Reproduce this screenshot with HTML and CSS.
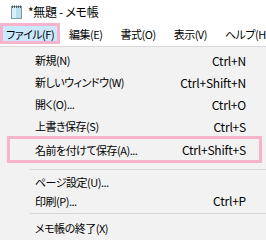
FILE: index.html
```html
<!DOCTYPE html>
<html lang="ja">
<head>
  <meta charset="UTF-8" />
  <title>*無題 - メモ帳</title>
  <link rel="stylesheet" href="styles.css">
</head>
<body>
  <div class="window">
    <div class="titlebar">
      <svg class="app-icon" width="11" height="14" viewBox="0 0 11 14">
        <rect x="0.5" y="1.5" width="10" height="12" fill="#cfeaf4" stroke="#7d97a3" />
        <rect x="1" y="2" width="9" height="11" fill="#b9dfee" />
        <rect x="1" y="2" width="4" height="11" fill="#d9f0f8" />
        <path d="M1.5 0.5v2.5M3.5 0.5v2.5M5.5 0.5v2.5M7.5 0.5v2.5M9.5 0.5v2.5" stroke="#555" stroke-width="1" />
      </svg>
      <span class="title">*無題 - メモ帳</span>
    </div>

    <div class="menubar">
      <span class="menu-item active">ファイル(F)</span>
      <span class="menu-item">編集(E)</span>
      <span class="menu-item">書式(O)</span>
      <span class="menu-item">表示(V)</span>
      <span class="menu-item">ヘルプ(H)</span>
    </div>

    <div class="dropdown">
      <div class="item"><span class="label">新規(N)</span><span class="key">Ctrl+N</span></div>
      <div class="item"><span class="label">新しいウィンドウ(W)</span><span class="key">Ctrl+Shift+N</span></div>
      <div class="item"><span class="label">開く(O)...</span><span class="key">Ctrl+O</span></div>
      <div class="item"><span class="label">上書き保存(S)</span><span class="key">Ctrl+S</span></div>
      <div class="item marked"><span class="label">名前を付けて保存(A)...</span><span class="key">Ctrl+Shift+S</span></div>
      <div class="sep sep-first"></div>
      <div class="item short"><span class="label">ページ設定(U)...</span></div>
      <div class="item short"><span class="label">印刷(P)...</span><span class="key">Ctrl+P</span></div>
      <div class="sep"></div>
      <div class="item"><span class="label">メモ帳の終了(X)</span></div>
    </div>
  </div>
</body>
</html>
```

FILE: styles.css
```css
* {
  margin: 0;
  padding: 0;
  box-sizing: border-box;
}

body {
  width: 266px;
  height: 240px;
  overflow: hidden;
  background: #ffffff;
  font-family: "Noto Sans CJK JP", "Noto Sans", sans-serif;
  font-size: 11px;
  letter-spacing: -0.5px;
  font-feature-settings: "palt";
  color: #000;
}

.titlebar {
  height: 22px;
  display: flex;
  align-items: center;
  padding-left: 11px;
  padding-top: 2px;
  gap: 6px;
}

.title {
  font-size: 12px;
  letter-spacing: -0.3px;
  line-height: 1;
}

.menubar {
  height: 25px;
  display: flex;
  align-items: flex-start;
  padding-top: 1px;
  border-bottom: 1px solid #d9d9d9;
  white-space: nowrap;
}

.menu-item {
  height: 21px;
  display: flex;
  align-items: center;
  padding: 0 9px;
}

.menu-item.active {
  background: #cce8ff;
  border: 3px solid #f5b4cc;
  padding: 0 3px 0 3px;
}

.dropdown {
  background: #f2f2f2;
  padding-top: 2px;
  height: 194px;
}

.item {
  height: 22px;
  display: flex;
  align-items: center;
  justify-content: space-between;
  padding: 0 20px 0 35px;
  white-space: nowrap;
}

.key {
  font-size: 12px;
  letter-spacing: -0.2px;
}

.item.marked {
  height: 27px;
  margin: -1px 4px 0 7px;
  border: 3px solid #f5b4cc;
  padding: 0 13px 0 25px;
}

.item.short {
  height: 19px;
}

.sep {
  margin: 3px 0 3px 30px;
  border-top: 1px solid #d7d7d7;
}

.sep.sep-first {
  margin-top: 6px;
  margin-bottom: 2px;
}
```
